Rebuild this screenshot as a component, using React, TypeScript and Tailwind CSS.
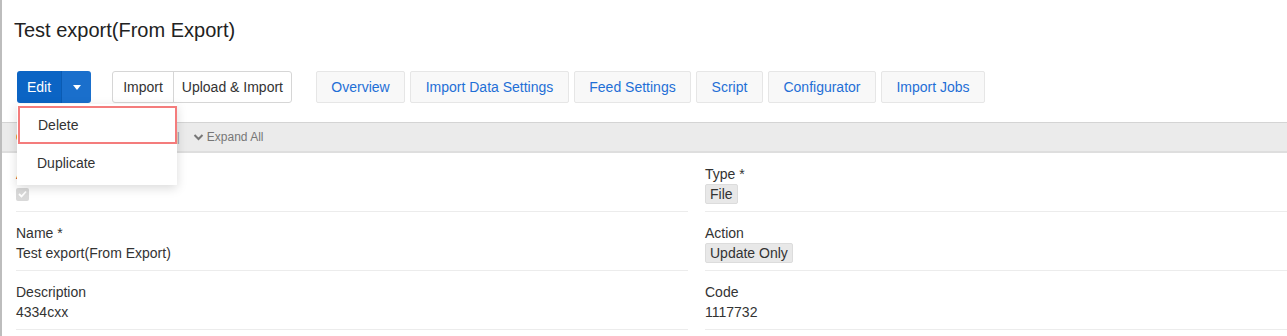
import React from 'react';

const tabs = [
  { label: 'Overview', w: 'w-[89px]' },
  { label: 'Import Data Settings', w: 'w-[159px]' },
  { label: 'Feed Settings', w: 'w-[117px]' },
  { label: 'Script', w: 'w-[67px]' },
  { label: 'Configurator', w: 'w-[108px]' },
  { label: 'Import Jobs', w: 'w-[104px]' },
];

const Row = ({ label, children }: { label: React.ReactNode; children: React.ReactNode }) => (
  <div className="border-b border-[#ececec] pt-[11px] pb-[7px]">
    <div className="h-[20px] text-[14px] leading-[20px] text-[#333]">{label}</div>
    <div className="flex h-[20px] items-center text-[14px] leading-[20px] text-[#333]">{children}</div>
  </div>
);

const Badge = ({ children }: { children: React.ReactNode }) => (
  <span className="inline-block h-[20px] rounded-[2px] border border-[#dcdcdc] bg-[#e8e8e8] px-[4px] text-[14px] leading-[18px] text-[#333]">
    {children}
  </span>
);

export default function App() {
  return (
    <div className="relative min-h-[336px] overflow-hidden border-l-2 border-[#bdbdbd] bg-white font-['Liberation_Sans',Arial,sans-serif] text-[#333]">
      {/* Header */}
      <div className="pl-[12px] pt-[18px]">
        <h1 className="text-[20px] leading-[24px] text-[#222]">Test export(From Export)</h1>
      </div>

      {/* Toolbar */}
      <div className="mt-[29px] flex items-center pl-[15px]">
        <div className="flex h-[32px] overflow-hidden rounded-[3px]">
          <button className="bg-[#0b64c4] px-[10px] text-[14px] text-white">Edit</button>
          <button className="flex w-[30px] items-center justify-center border-l border-[#0a5bb3] bg-[#1a6fcc]">
            <svg width="8" height="5" viewBox="0 0 8 5">
              <path d="M0 0h8L4 5z" fill="#fff" />
            </svg>
          </button>
        </div>
        <div className="ml-[21px] flex h-[32px] rounded-[3px] border border-[#d6d6d6] bg-white text-[14px] text-[#333]">
          <button className="px-[10px]">Import</button>
          <button className="border-l border-[#d6d6d6] px-[8px]">Upload &amp; Import</button>
        </div>
        <div className="ml-[24px] flex gap-[5px]">
          {tabs.map((t) => (
            <button
              key={t.label}
              className={`${t.w} h-[32px] shrink-0 rounded-[2px] border border-[#e6e6e6] bg-[#f8f8f8] text-center text-[14px] text-[#1f6fd6]`}
            >
              {t.label}
            </button>
          ))}
        </div>
      </div>

      {/* Collapse bar */}
      <div className="mt-[19px] flex h-[31px] items-center border-t border-[#d4d4d4] border-b-2 border-b-[#dedede] bg-[#ebebeb] pl-[14px] text-[12px] text-[#777]">
        <span className="mr-[4px] inline-block h-[8px] w-[8px] rounded-full bg-[#f0a030]" />
        <span className="flex items-center gap-[3px]">
          <svg width="11" height="10" viewBox="0 0 11 10">
            <path d="M1.5 7L5.5 3l4 4" stroke="#777" strokeWidth="2" fill="none" />
          </svg>
          Collapse All
        </span>
        <span className="ml-[72px] text-[#999]">|</span>
        <span className="ml-[13px] flex items-center gap-[3px]">
          <svg width="11" height="10" viewBox="0 0 11 10">
            <path d="M1.5 3L5.5 7l4-4" stroke="#777" strokeWidth="2" fill="none" />
          </svg>
          Expand All
        </span>
      </div>

      {/* Form */}
      <div className="flex gap-[17px] pl-[14px]">
        <div className="w-[672px] shrink-0">
          <Row label={<span className="text-[#c0392b]">Active</span>}>
            <span className="flex h-[13px] w-[13px] items-center justify-center rounded-[2px] bg-[#d9d9d9]">
              <svg width="9" height="8" viewBox="0 0 9 8">
                <path d="M1 4l2.5 2.5L8 1.5" stroke="#fff" strokeWidth="1.8" fill="none" />
              </svg>
            </span>
          </Row>
          <Row label="Name *">Test export(From Export)</Row>
          <Row label="Description">4334cxx</Row>
        </div>
        <div className="flex-1">
          <Row label="Type *">
            <Badge>File</Badge>
          </Row>
          <Row label="Action">
            <Badge>Update Only</Badge>
          </Row>
          <Row label="Code">1117732</Row>
        </div>
      </div>

      {/* Edit dropdown menu */}
      <div className="absolute left-[15px] top-[104px] w-[160px] bg-white py-[2px] shadow-[0_3px_10px_rgba(0,0,0,0.15)]">
        <div className="ml-[1px] flex h-[38px] items-center border-2 border-[#f47c7c] pl-[18px] text-[14px] text-[#333]">
          Delete
        </div>
        <div className="flex h-[39px] items-center pl-[20px] text-[14px] text-[#333]">Duplicate</div>
      </div>
    </div>
  );
}
